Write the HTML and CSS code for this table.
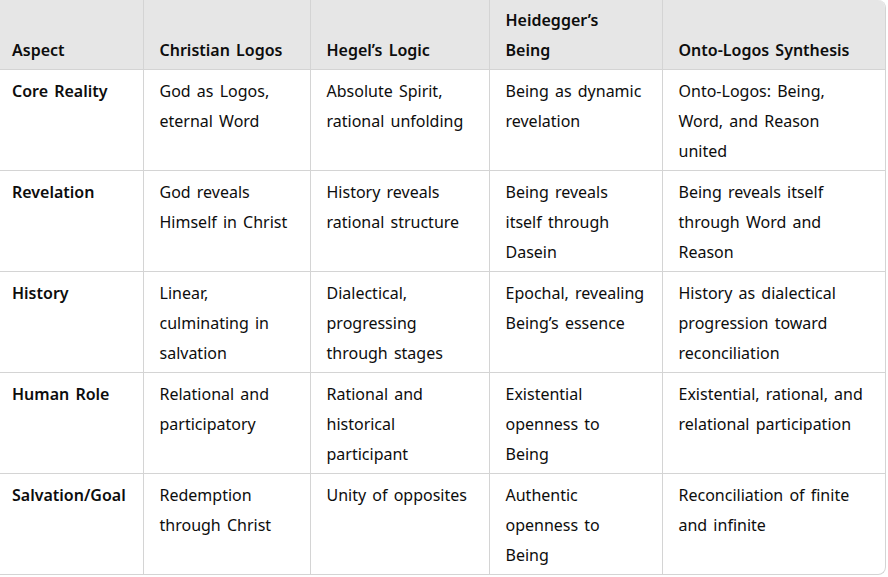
FILE: index.html
```html
<!DOCTYPE html>
<html>
<head>
<meta charset="utf-8">
<link rel="stylesheet" href="styles.css">
</head>
<body>
<div class="wrap">
<table class="grid">
<colgroup>
<col class="c1"><col class="c2"><col class="c3"><col class="c4"><col class="c5">
</colgroup>
<thead>
<tr><th>Aspect</th><th>Christian Logos</th><th>Hegel’s Logic</th><th>Heidegger’s Being</th><th>Onto-Logos Synthesis</th></tr>
</thead>
<tbody>
<tr><td class="key">Core Reality</td><td>God as Logos, eternal Word</td><td>Absolute Spirit, rational unfolding</td><td>Being as dynamic revelation</td><td>Onto-Logos: Being, Word, and Reason united</td></tr>
<tr><td class="key">Revelation</td><td>God reveals Himself in Christ</td><td>History reveals rational structure</td><td>Being reveals itself through Dasein</td><td>Being reveals itself through Word and Reason</td></tr>
<tr><td class="key">History</td><td>Linear, culminating in salvation</td><td>Dialectical, progressing through stages</td><td>Epochal, revealing Being’s essence</td><td>History as dialectical progression toward reconciliation</td></tr>
<tr><td class="key">Human Role</td><td>Relational and participatory</td><td>Rational and historical participant</td><td>Existential openness to Being</td><td>Existential, rational, and relational participation</td></tr>
<tr><td class="key">Salvation/Goal</td><td>Redemption through Christ</td><td>Unity of opposites</td><td>Authentic openness to Being</td><td>Reconciliation of finite and infinite</td></tr>
</tbody>
</table>
</div>
</body>
</html>
```
FILE: styles.css
```css
html, body {
  margin: 0;
  padding: 0;
  background: #ffffff;
}
body {
  font-family: "Noto Sans", "Open Sans", sans-serif;
  font-size: 16px;
  word-spacing: 2px;
  color: #0d0d0d;
}
.wrap {
  width: 886px;
  border-right: 1px solid #d4d4d4;
  border-bottom: 1px solid #d4d4d4;
  border-radius: 0 8px 8px 0;
  overflow: hidden;
  box-sizing: border-box;
}
.grid {
  border-collapse: collapse;
  table-layout: fixed;
  width: 885px;
}
.c1 { width: 143px; }
.c2 { width: 167px; }
.c3 { width: 179px; }
.c4 { width: 173px; }
.c5 { width: 223px; }
th, td {
  line-height: 30px;
  text-align: left;
  border-right: 1px solid #d4d4d4;
  border-bottom: 1px solid #d4d4d4;
  padding: 6px 16px 4px 16px;
}
th:last-child, td:last-child { border-right: none; }
tbody tr:last-child td { border-bottom: none; }
th {
  background: #e6e6e6;
  font-weight: 600;
  vertical-align: bottom;
  padding-top: 5px;
}
td {
  vertical-align: top;
  font-weight: 400;
}
th:first-child, td:first-child { padding-left: 12px; }
td.key { font-weight: 600; }
```
